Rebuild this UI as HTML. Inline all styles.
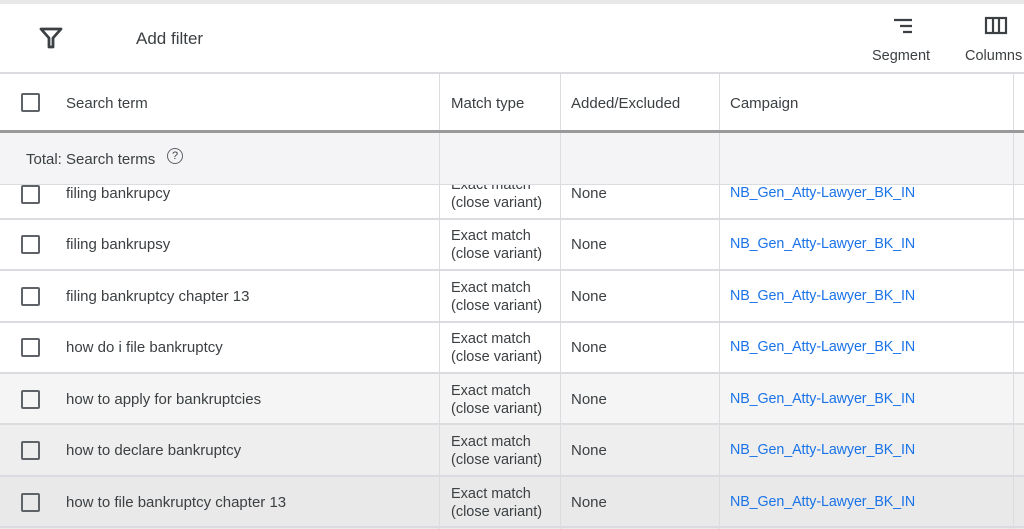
<!DOCTYPE html><html><head><style>
body{margin:0;width:1024px;height:529px;overflow:hidden;background:#fff;font-family:"Liberation Sans",sans-serif;color:#3c4043;position:relative}
.a{position:absolute}
.v{position:absolute;top:74px;bottom:0;width:1px;background:#dadce0}
.h{position:absolute;left:0;width:1024px;height:2px;background:#dadce0}
.cb{position:absolute;left:21px;width:15px;height:15px;border:2px solid #5f6368;border-radius:2px}
.t{position:absolute;font-size:15px}
.m{position:absolute;left:451px;font-size:14.5px;line-height:18px}
.l{color:#1a73e8;font-size:14.3px;letter-spacing:-0.1px}
</style></head><body>
<div class="a" style="left:0;top:0;width:1024px;height:4px;background:#e8e8e8"></div>
<svg class="a" style="left:39px;top:27px" width="24" height="22" viewBox="0 0 24 22"><path d="M2 2H22L14 11V20H10V11Z" fill="none" stroke="#3c4043" stroke-width="2.8" stroke-linejoin="round"/></svg>
<div class="t" style="left:136px;top:29px;font-size:17px">Add filter</div>
<svg class="a" style="left:892px;top:17px" width="22" height="18"><path d="M2 3H20M8 9H20M11 15H20" stroke="#3c4043" stroke-width="2.2"/></svg>
<div class="t" style="left:872px;top:48px;font-size:14.5px">Segment</div>
<svg class="a" style="left:984px;top:16px" width="24" height="20"><rect x="2" y="2" width="20" height="15" fill="none" stroke="#3c4043" stroke-width="2.2"/><path d="M9 2V17M15 2V17" stroke="#3c4043" stroke-width="2.2"/></svg>
<div class="t" style="left:965px;top:48px;font-size:14.5px">Columns</div>
<div class="h" style="top:72px"></div>
<div class="a" style="left:0;top:133px;width:1024px;height:51px;background:#f4f4f6"></div>
<div class="a" style="left:0;top:373px;width:1024px;height:51px;background:#f5f5f5"></div>
<div class="a" style="left:0;top:424px;width:1024px;height:52px;background:#eeeeee"></div>
<div class="a" style="left:0;top:476px;width:1024px;height:53px;background:#e9e9e9"></div>
<div class="v" style="left:439px"></div><div class="v" style="left:560px"></div><div class="v" style="left:719px"></div><div class="v" style="left:1013px"></div>
<div class="a" style="left:0;top:130px;width:1024px;height:3px;background:#9a9a9a"></div>
<div class="h" style="top:184px;height:1px"></div>
<div class="h" style="top:218px"></div><div class="h" style="top:269px"></div><div class="h" style="top:321px"></div><div class="h" style="top:372px"></div><div class="h" style="top:423px"></div><div class="h" style="top:475px"></div><div class="h" style="top:526px"></div>
<div class="cb" style="top:93px"></div>
<div class="t" style="left:66px;top:95px">Search term</div>
<div class="t" style="left:451px;top:95px">Match type</div>
<div class="t" style="left:571px;top:95px">Added/Excluded</div>
<div class="t" style="left:730px;top:95px">Campaign</div>
<div class="t" style="left:26px;top:151px">Total: Search terms</div>
<div class="a" style="left:167px;top:148px;width:14px;height:14px;border:1.5px solid #5f6368;border-radius:50%;font-size:11px;text-align:center;line-height:14px">?</div>
<div style="position:absolute;left:0;top:185px;width:1024px;height:33px;overflow:hidden">
<div class="cb" style="top:0px"></div><div class="t" style="left:66px;top:0px">filing bankrupcy</div>
<div class="m" style="top:-9px">Exact match<br>(close variant)</div>
<div class="t" style="left:571px;top:0px">None</div><div class="t l" style="left:730px;top:0px">NB_Gen_Atty-Lawyer_BK_IN</div></div>
<div class="cb" style="top:235px"></div><div class="t" style="left:66px;top:236px">filing bankrupsy</div><div class="m" style="top:227px">Exact match<br>(close variant)</div><div class="t" style="left:571px;top:236px">None</div><div class="t l" style="left:730px;top:236px">NB_Gen_Atty-Lawyer_BK_IN</div>
<div class="cb" style="top:287px"></div><div class="t" style="left:66px;top:288px">filing bankruptcy chapter 13</div><div class="m" style="top:279px">Exact match<br>(close variant)</div><div class="t" style="left:571px;top:288px">None</div><div class="t l" style="left:730px;top:288px">NB_Gen_Atty-Lawyer_BK_IN</div>
<div class="cb" style="top:338px"></div><div class="t" style="left:66px;top:339px">how do i file bankruptcy</div><div class="m" style="top:330px">Exact match<br>(close variant)</div><div class="t" style="left:571px;top:339px">None</div><div class="t l" style="left:730px;top:339px">NB_Gen_Atty-Lawyer_BK_IN</div>
<div class="cb" style="top:390px"></div><div class="t" style="left:66px;top:391px">how to apply for bankruptcies</div><div class="m" style="top:382px">Exact match<br>(close variant)</div><div class="t" style="left:571px;top:391px">None</div><div class="t l" style="left:730px;top:391px">NB_Gen_Atty-Lawyer_BK_IN</div>
<div class="cb" style="top:441px"></div><div class="t" style="left:66px;top:442px">how to declare bankruptcy</div><div class="m" style="top:433px">Exact match<br>(close variant)</div><div class="t" style="left:571px;top:442px">None</div><div class="t l" style="left:730px;top:442px">NB_Gen_Atty-Lawyer_BK_IN</div>
<div class="cb" style="top:493px"></div><div class="t" style="left:66px;top:494px">how to file bankruptcy chapter 13</div><div class="m" style="top:485px">Exact match<br>(close variant)</div><div class="t" style="left:571px;top:494px">None</div><div class="t l" style="left:730px;top:494px">NB_Gen_Atty-Lawyer_BK_IN</div>
</body></html>
